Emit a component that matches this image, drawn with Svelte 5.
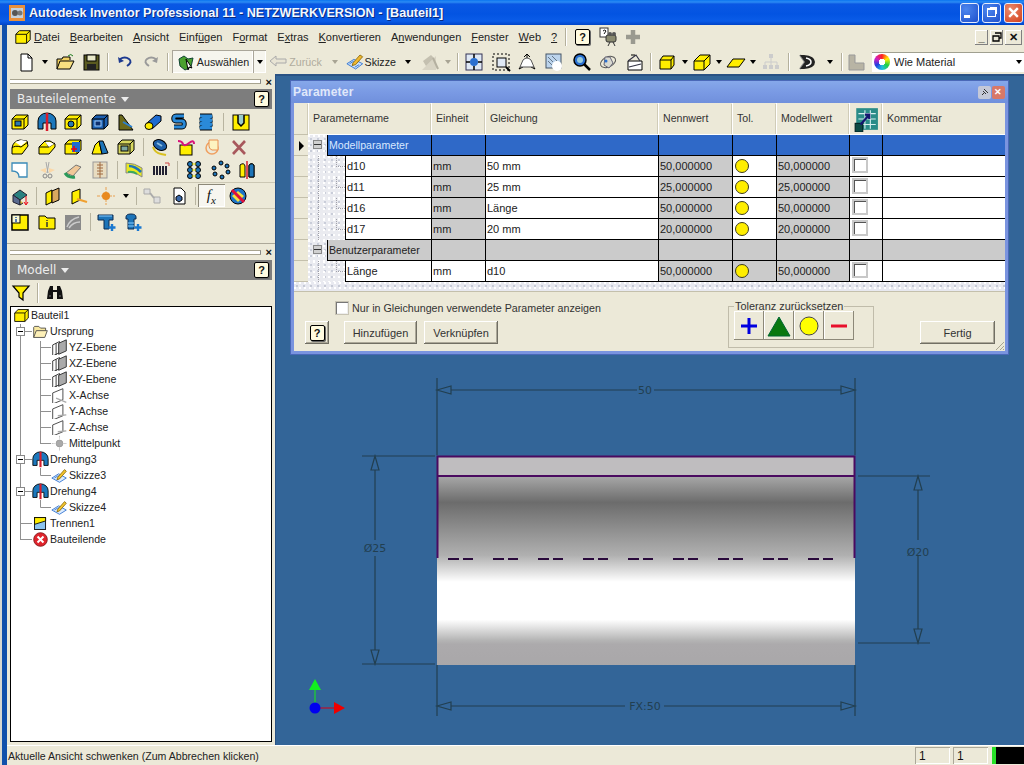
<script>
	// small icon helpers, all drawn on a 20x20 box
	const box = (inner = '', fill = '#ffee00') =>
		`<path d="M2 7l4-4h12v10l-4 4H2z" fill="${fill}" stroke="#000"/><path d="M2 7h12v10M14 7l4-4" fill="none" stroke="#000"/>${inner}`;
	const thick = (d, c) =>
		`<path d="${d}" fill="none" stroke="#000" stroke-width="5"/><path d="${d}" fill="none" stroke="${c}" stroke-width="3"/>`;
	const plus = `<path d="M15 12v7M11.500 15.500h7" stroke="#1a78d0" stroke-width="2.400"/>`;
	const planes = `<path d="M2 7l8-4v13l-8 4z" fill="#fff" stroke="#222"/><path d="M9 5l9-4v13l-9 4z" fill="#aaa" stroke="#222"/><path d="M6 5v15" stroke="#222"/>`;
	const axis = (d) => `<path d="M2 7l12-5v13L2 20z" fill="#fff" stroke="#333"/><path d="${d}" stroke="#aaa" stroke-width="1.500" fill="none"/>`;
	const revolve = `<path d="M1 17V9a9 8 0 0 1 18 0v8h-5v-6H6v6z" fill="#1d78bc" stroke="#000"/><path d="M10 1v18" stroke="#d81c2c" stroke-width="2.500"/>`;
	const sketch = `<path d="M1 13l8-5 9 5-8 5z" fill="#dcecff" stroke="#2a6fd0"/><path d="M4 13l5-3M7 15l5-3" stroke="#2a6fd0"/><path d="M8 12l8-9 2 2-8 9-3 1z" fill="#f4c52c" stroke="#8a6a10"/>`;

	const icons = {
		extrude: box('<rect x="5" y="9" width="6" height="5" fill="#2a7ab0" stroke="#000"/>'),
		revolve,
		hole: box('<circle cx="8" cy="12" r="3" fill="#2a7ab0" stroke="#000"/>'),
		shell: box('<rect x="5" y="9" width="6" height="5" fill="#0e2f6e" stroke="#9cf"/>', '#1d5fb0'),
		rib: '<path d="M3 18V3h3l11 15z" fill="#6c6a1c" stroke="#000"/><path d="M7 10l9 5" stroke="#2a80d0" stroke-width="2"/>',
		loft: '<path d="M4 11l9-8 5 1v5l-9 8z" fill="#1f6cd0" stroke="#000"/><ellipse cx="6" cy="14" rx="4" ry="3.500" fill="#ffee00" stroke="#000"/>',
		sweep: thick('M15 4H7c-3 0-3 5 0 5h6c3 0 3 6 0 6H5', '#2a8ad8'),
		coil: thick('M4 4h12l-12 4h12l-12 4h12l-12 4h12', '#2a8ad8'),
		emboss: '<rect x="2" y="3" width="16" height="15" fill="#ffee00" stroke="#000"/><path d="M7 3v8l3 3 3-3V3" fill="#9cc" stroke="#000" stroke-width="1.500"/>',
		fillet: '<path d="M2 17v-6q1-7 8-8l7 1 1 5-6 8z" fill="#ffee00" stroke="#000"/><path d="M2 11q3-3 9-1l7-5" fill="none" stroke="#000"/><path d="M5 5l6-2 6 1-6 5z" fill="#fff"/>',
		chamfer: '<path d="M2 17v-7l6-6h5l5 3v3l-6 7z" fill="#ffee00" stroke="#000"/><path d="M2 10l10 0 6-4M8 4l4 6" fill="none" stroke="#000"/><path d="M8 5h5l4 2-5 3z" fill="#fff"/>',
		moveface: box('<rect x="9" y="5" width="8" height="10" fill="#1f6cd0"/><path d="M8 12h6M11 9v6" stroke="#e01" stroke-width="1.500"/>', '#ffee00'),
		draft: '<path d="M2 17l3-9 4-4 3 13z" fill="#ffee00" stroke="#000"/><path d="M9 4h4l5 12-6 1z" fill="#1d74b8" stroke="#000"/>',
		split: box('<rect x="5" y="9" width="7" height="5" fill="#7fa8a0" stroke="#000"/>', '#d8d860'),
		bend: '<ellipse cx="10" cy="8" rx="7" ry="5" transform="rotate(25 10 8)" fill="#1d5fa8" stroke="#000"/><path d="M3 10q2 6 8 7l5 1" fill="none" stroke="#d8c020" stroke-width="2"/><path d="M7 6l5 3" stroke="#8bd" stroke-width="2"/>',
		replace: '<rect x="4" y="8" width="12" height="10" fill="#ffee00" stroke="#000"/><path d="M2 4q4 0 5 3t6-1 5 1" fill="none" stroke="#d8147a" stroke-width="2"/>',
		corner: '<circle cx="9" cy="11" r="6" fill="none" stroke="#f0a060" stroke-width="1.500"/><path d="M6 3h9v10H9q-3-1-3-4z" fill="#fdf3c0" stroke="#e89050"/>',
		del: '<path d="M4 4l12 13M16 4L4 17" stroke="#a8585c" stroke-width="2.600"/>',
		notch: '<path d="M2 3h15v14H9q0-6-7-6z" fill="#fff" stroke="#3a8ab8" stroke-width="1.300"/>',
		scissors: '<path d="M3 10l6-2v5zM18 10l-6-2v5z" fill="#fbd8a8"/><path d="M9 2l2 11M12 2l-2 11" stroke="#a8a8a8"/><circle cx="8" cy="16" r="2" fill="none" stroke="#888"/><circle cx="13" cy="16" r="2" fill="none" stroke="#888"/>',
		patch: '<path d="M3 13l10-8 5 2-8 9z" fill="#f0c898" stroke="#777"/><path d="M2 13q3 5 10 4" fill="none" stroke="#2a9a5a" stroke-width="3"/>',
		thread: '<rect x="3" y="2" width="14" height="16" fill="#e8dcc0" stroke="#999"/><path d="M10 2v16M7 5h6M7 8h6M7 11h6M7 14h6" stroke="#a06a40"/>',
		decal: '<path d="M2 3q9 0 16 5v9q-8-6-16-4z" fill="#e8e820" stroke="#888"/><path d="M5 6q6 0 12 6" fill="none" stroke="#1d74b8" stroke-width="2.500"/><path d="M4 12q5-1 9 2" fill="none" stroke="#3aa860" stroke-width="2"/>',
		barcode: '<path d="M3 6v9M6 6v9M9 6v9M12 6v9M15 6v9" stroke="#223" stroke-width="2"/><path d="M14 3h4v3" fill="none" stroke="#c44"/>',
		rect: '<g fill="#1d74b8" stroke="#000"><circle cx="6" cy="4" r="2.500"/><circle cx="14" cy="4" r="2.500"/><circle cx="6" cy="10" r="2.500"/><circle cx="14" cy="10" r="2.500"/><circle cx="6" cy="16" r="2.500"/><circle cx="14" cy="16" r="2.500"/></g><path d="M8 4h4M8 10h4M8 16h4" stroke="#dd0"/>',
		circ: '<g fill="#1d74b8" stroke="#000"><circle cx="10" cy="3" r="2"/><circle cx="16" cy="6" r="2"/><circle cx="17" cy="12" r="2"/><circle cx="11" cy="17" r="2"/><circle cx="4" cy="14" r="2"/><circle cx="3" cy="8" r="2"/></g>',
		mirror: '<path d="M3 5q4-3 5 1v11H3zM17 5q-4-3-5 1v11h5z" fill="#ffee00" stroke="#000"/><path d="M12 5q4-3 5 1v11h-5z" fill="#1d74b8" stroke="#000"/><path d="M10 1v18" stroke="#d81c2c" stroke-width="1.500"/>',
		derive: '<path d="M3 9l7-5 7 5-7 5z" fill="#2a8080" stroke="#223"/><path d="M3 9v7l7 3v-5z" fill="#5a6a90" stroke="#223"/><path d="M10 14v5l3-2" fill="#e0c040" stroke="#223"/><path d="M16 10v8m-2-2l2 3 2-3" stroke="#e01" fill="none"/>',
		wplane: '<path d="M3 7l6-3v12l-6 3z" fill="#ffee00" stroke="#000"/><path d="M9 5l7-3v12l-7 3z" fill="#d8a860" stroke="#000"/>',
		waxis: '<path d="M3 6l8-3v11l-8 4z" fill="#ffee00" stroke="#000"/><path d="M8 13l10 3" stroke="#f0a030" stroke-width="2"/>',
		wpoint: '<path d="M10 1v18M1 10h18" stroke="#e8a050" stroke-dasharray="3 1"/><circle cx="10" cy="10" r="4" fill="#e88a20"/>',
		link: '<path d="M2 3h6v5H2zM12 11h6v6h-6z" fill="#ddd" stroke="#aaa"/><path d="M8 7l4 5" stroke="#aaa" stroke-width="2"/>',
		doc: '<path d="M5 2h7l4 4v12H5z" fill="#fff" stroke="#000"/><path d="M7 11l3-2 3 2v3l-3 2-3-2z" fill="#3a68a8" stroke="#000"/>',
		nogo: '<circle cx="10" cy="10" r="8" fill="#1d74c8" stroke="#000"/><path d="M10 5l6 5-6 6-6-6z" fill="#f0e040"/><path d="M4 4l12 12" stroke="#e0103c" stroke-width="3"/>',
		note: '<rect x="2" y="3" width="16" height="15" fill="#ffee00" stroke="#000" stroke-width="1.500"/><rect x="2" y="3" width="8" height="8" fill="#f8f8d0" stroke="#000"/><path d="M6 5v1M6 7v3" stroke="#1d4fb0" stroke-width="1.500"/>',
		folderi: '<path d="M2 6V4h6l2 2h8v11H2z" fill="#ffee00" stroke="#000"/><path d="M10 8v1M10 10v5" stroke="#333" stroke-width="1.500"/>',
		sculpt: '<rect x="2" y="3" width="16" height="15" fill="#8a8a8a"/><path d="M4 15q3-8 12-10M6 16q4-6 11-6" stroke="#ccc" stroke-width="1.500" fill="none"/>',
		tpipe: `<path d="M1 3h15v5h-4v9H7V8H1z" fill="#1d74b8" stroke="#0c2a50"/><path d="M2 4h13" stroke="#8cf"/>${plus}`,
		bolt: `<path d="M3 5q0-3 5-3t5 3v2h-2v10H5V7H3z" fill="#1d74b8" stroke="#0c2a50"/><path d="M5 11h6M5 14h6" stroke="#8cf"/>${plus}`,
		filter: '<path d="M2 3h16l-6 7v7l-4-3v-4z" fill="#ffee00" stroke="#000" stroke-width="1.200"/>',
		binoc: '<path d="M3 8l2-5h3v4h4V3h3l2 5 1 8h-6v-7H8v7H2z" fill="#111"/><path d="M4 13h2M14 13h2" stroke="#777"/>',
		// tree
		part: box(''),
		folder: '<path d="M2 17V5l1-1h5l2 2h6v3" fill="#f8e8a0" stroke="#444"/><path d="M2 17l3-8h13l-3 8z" fill="#fdf0b8" stroke="#444"/>',
		planes,
		xaxis: axis('M6 13l12 5'),
		yaxis: axis('M8 15l10-1'),
		zaxis: axis('M8 15l10-1'),
		midpt: '<circle cx="10" cy="10" r="4" fill="#aaa" stroke="#999"/><path d="M10 1v4M10 15v4M1 10h4M15 10h3" stroke="#999" stroke-dasharray="1 1"/>',
		sketch,
		cut: '<rect x="3" y="3" width="13" height="14" fill="#8cc4f0" stroke="#000"/><path d="M3 3h13v4L3 11z" fill="#ffee00" stroke="#000"/>',
		end: '<circle cx="10" cy="10" r="8" fill="#e0242c" stroke="#801014"/><path d="M6.500 6.500l7 7M13.500 6.500l-7 7" stroke="#fff" stroke-width="2.400"/>',
		// main toolbar
		newdoc: '<path d="M5 2h7l4 4v13H5z" fill="#fff" stroke="#000"/><path d="M12 2v4h4" fill="none" stroke="#000"/>',
		open: '<path d="M2 17V7h5l1-2h7v3" fill="#f0d060" stroke="#000"/><path d="M2 17l3-8h14l-4 8z" fill="#f8e080" stroke="#000"/><path d="M13 4q3-3 5 0" fill="none" stroke="#1a7a1a"/>',
		save: '<rect x="3" y="3" width="15" height="15" fill="#5a5a20" stroke="#000"/><rect x="6" y="3" width="9" height="6" fill="#e8e8c8" stroke="#000"/><rect x="6" y="12" width="9" height="6" fill="#222"/>',
		undo: '<path d="M5 7q5-3 9 0t-2 7" fill="none" stroke="#1d3a90" stroke-width="2"/><path d="M3 5l1 6 5-2z" fill="#1d3a90"/>',
		redo: '<path d="M15 7q-5-3-9 0t2 7" fill="none" stroke="#9a9a9a" stroke-width="2"/><path d="M17 5l-1 6-5-2z" fill="#9a9a9a"/>',
		pick: '<path d="M3 7l5-3 4 3 5-1-2 9-6 3-5-4z" fill="#4aa030" stroke="#143"/><path d="M10 7l6 9-3-1-1 3z" fill="#fff" stroke="#000"/>',
		back: '<path d="M2 9l6-5v3h10v4H8v3z" fill="#e8e4d4" stroke="#aaa"/>',
		skizze: '<path d="M1 12l8-5 10 5-8 6z" fill="#cfe2fa" stroke="#2a6fd0"/><path d="M4 12l5-3M7 14l5-3M10 16l5-3" stroke="#2a6fd0"/><path d="M8 11l8-9 3 2-8 9-4 1z" fill="#f0b830" stroke="#8a6a10"/>',
		gsk: '<path d="M2 18l14-14v14z" fill="#d8d4c4"/><path d="M3 9l8-6 3 3-8 8z" fill="#c4c0b0"/><path d="M13 6l5 11" stroke="#b4b0a0" stroke-width="2"/>',
		zall: '<rect x="2" y="2" width="16" height="16" fill="#dfe8f4" stroke="#335"/><circle cx="10" cy="10" r="4" fill="#2a6fd0"/><path d="M10 2v4M10 14v4M2 10h4M14 10h4" stroke="#000" stroke-width="1.500"/>',
		zwin: '<rect x="2" y="2" width="16" height="16" fill="none" stroke="#000" stroke-dasharray="2 2"/><rect x="6" y="6" width="9" height="9" fill="#dfe8f4" stroke="#000"/><path d="M15 15l4 4" stroke="#000" stroke-width="2"/>',
		pan3: '<path d="M10 2v4M10 2l-3 3M10 2l3 3M2 17l4-2M2 17l2-3M18 17l-4-2M18 17l-2-3" stroke="#000" fill="none"/><path d="M6 8q4-4 8 0l3 7H3z" fill="#fff" stroke="#555"/>',
		hand: '<rect x="2" y="2" width="15" height="14" fill="#bcd4ec" stroke="#456"/><path d="M4 5l5 5M8 4l5 5M4 9l5 5" stroke="#678"/><circle cx="13" cy="14" r="5" fill="#fff"/>',
		zoom: '<circle cx="9" cy="8" r="6" fill="#2a6fd0" stroke="#000" stroke-width="1.500"/><circle cx="9" cy="8" r="3" fill="#9cd"/><path d="M13 12l6 6" stroke="#000" stroke-width="2.500"/>',
		orbit: '<ellipse cx="10" cy="10" rx="8" ry="5" transform="rotate(-25 10 10)" fill="none" stroke="#555"/><path d="M7 5l5 0 3 6-4 5-5-3z" fill="#d8d8d0" stroke="#667"/><circle cx="8" cy="9" r="1.500" fill="#2a6fd0"/>',
		look: '<path d="M3 9h14v9H3z" fill="#fff" stroke="#000"/><path d="M3 9l8-6 4 6M4 15l12-3" fill="none" stroke="#334" stroke-width="1.200"/><path d="M6 3h4" stroke="#000"/>',
		cube: '<path d="M3 8l3-4h11v9l-3 4H3z" fill="#ffee00" stroke="#000"/><path d="M3 8h11v9M14 8l3-4" fill="none" stroke="#000"/>',
		cube2: '<path d="M2 9l6-6h10v9l-6 6H2z" fill="#ffee00" stroke="#000"/><path d="M2 9h10v9M12 9l6-6" fill="none" stroke="#000"/>',
		face: '<path d="M1 15L7 7h12l-6 8z" fill="#ffee00" stroke="#000"/>',
		tree: '<rect x="8" y="2" width="4" height="4" fill="#ccc"/><rect x="2" y="13" width="4" height="4" fill="#ccc"/><rect x="8" y="13" width="4" height="4" fill="#ccc"/><rect x="14" y="13" width="4" height="4" fill="#ccc"/><path d="M10 6v7M4 13v-3h12v3" stroke="#ccc" fill="none"/>',
		shade: '<path d="M3 3l5 7-5 7" fill="none" stroke="#888" stroke-width="2"/><path d="M3 3h4q11 1 11 7t-11 7H3l5-7z" fill="#222"/><path d="M9 6q5 1 5 4t-5 4" fill="none" stroke="#fff" stroke-width="1.500"/>',
		display: '<path d="M3 3h6v8h9v7H3z" fill="#b8b4a4" stroke="#999"/>',
		// menu row
		helpfilm: '<rect x="2" y="1" width="8" height="9" fill="#fff" stroke="#333"/><path d="M5 4q2-2 3 0l-2 3" fill="none" stroke="#111"/><rect x="8" y="8" width="10" height="7" rx="2" fill="#8a8a70" stroke="#333"/><circle cx="12" cy="7" r="2" fill="#555"/><circle cx="16" cy="7" r="2" fill="#555"/><path d="M12 15l-2 4M15 15l2 4" stroke="#333"/>',
		addon: '<path d="M10 3v14M3 10h14" stroke="#9a9a90" stroke-width="4.500"/>'
	};

	const tools = [
		{ w: 24, i: 'newdoc' }, { w: 14, d: 1 }, { w: 26, i: 'open' }, { w: 26, i: 'save' }, { w: 8, s: 1 },
		{ w: 26, i: 'undo' }, { w: 26, i: 'redo' }, { w: 8, s: 1 },
		{ w: 81, i: 'pick', t: 'Auswählen', on: 1 }, { w: 13, d: 1, on: 1 },
		{ w: 58, i: 'back', t: 'Zurück', off: 1 }, { w: 22, d: 1, off: 1 },
		{ w: 50, i: 'skizze', t: 'Skizze' }, { w: 24, d: 1 }, { w: 20, i: 'gsk' }, { w: 16, d: 1, off: 1 }, { w: 4, s: 1 },
		{ w: 28, i: 'zall' }, { w: 26, i: 'zwin' }, { w: 26, i: 'pan3' }, { w: 28, i: 'hand' }, { w: 26, i: 'zoom' },
		{ w: 28, i: 'orbit' }, { w: 26, i: 'look' }, { w: 6, s: 1 },
		{ w: 26, i: 'cube' }, { w: 10, d: 1 }, { w: 24, i: 'cube2' }, { w: 10, d: 1 }, { w: 24, i: 'face' }, { w: 10, d: 1 },
		{ w: 26, i: 'tree' }, { w: 10, s: 1 }, { w: 26, i: 'shade' }, { w: 20, d: 1 }, { w: 4, s: 1 }, { w: 24, i: 'display' }
	];

	const menus = [
		['D', 'atei'], ['B', 'earbeiten'], ['A', 'nsicht'], ['', 'Einf', 'ü', 'gen'], ['', 'F', 'o', 'rmat'], ['', 'E', 'x', 'tras'],
		['K', 'onvertieren'], ['', 'A', 'n', 'wendungen'], ['F', 'enster'], ['W', 'eb'], ['?', '']
	];

	// '|' is a separator, 'v' a little dropdown arrow
	const panelRows = [
		{ cls: 'r1', items: ['extrude', 'revolve', 'hole', 'shell', 'rib', 'loft', 'sweep', 'coil', '|9', 'emboss'] },
		{ cls: 'r2', line: true, items: ['fillet', 'chamfer', 'moveface', 'draft', 'split', '|7', 'bend', 'replace', 'corner', 'del'] },
		{ cls: 'r3', items: ['notch', 'scissors', 'patch', 'thread', '|8', 'decal', 'barcode', '|7', 'rect', 'circ', 'mirror'] },
		{ cls: 'r4', line: true, items: ['derive', '|6', 'wplane', 'waxis', 'wpoint', 'v', '|6', 'link', 'doc', '|6', 'fx', 'nogo'] },
		{ cls: 'r5', line: true, items: ['note', 'folderi', 'sculpt', '|7', 'tpipe', 'bolt'] }
	];

	const treeRows = [
		{ lv: 0, i: 'part', t: 'Bauteil1' },
		{ lv: 1, i: 'folder', t: 'Ursprung' },
		{ lv: 2, i: 'planes', t: 'YZ-Ebene' },
		{ lv: 2, i: 'planes', t: 'XZ-Ebene' },
		{ lv: 2, i: 'planes', t: 'XY-Ebene' },
		{ lv: 2, i: 'xaxis', t: 'X-Achse' },
		{ lv: 2, i: 'yaxis', t: 'Y-Achse' },
		{ lv: 2, i: 'zaxis', t: 'Z-Achse' },
		{ lv: 2, i: 'midpt', t: 'Mittelpunkt' },
		{ lv: 1, i: 'revolve', t: 'Drehung3' },
		{ lv: 2, i: 'sketch', t: 'Skizze3' },
		{ lv: 1, i: 'revolve', t: 'Drehung4' },
		{ lv: 2, i: 'sketch', t: 'Skizze4' },
		{ lv: 1, i: 'cut', t: 'Trennen1' },
		{ lv: 1, i: 'end', t: 'Bauteilende' }
	];

	const params = [
		{ group: 'Modellparameter', kind: 'blue' },
		{ name: 'd10', eq: '50 mm', val: '50,000000', model: '50,000000' },
		{ name: 'd11', eq: '25 mm', val: '25,000000', model: '25,000000' },
		{ name: 'd16', eq: 'Länge', val: '50,000000', model: '50,000000' },
		{ name: 'd17', eq: '20 mm', val: '20,000000', model: '20,000000' },
		{ group: 'Benutzerparameter', kind: 'grey' },
		{ name: 'Länge', eq: 'd10', val: '50,000000', model: '50,000000', user: true }
	];

	const dashes = [448, 493, 538, 583, 628, 673, 718, 763, 808];
</script>

{#snippet ic(name)}
	<svg class="ic" viewBox="0 0 20 20" width="20" height="20">{@html icons[name]}</svg>
{/snippet}

{#snippet grip(cls)}
	<div class="grip {cls}"><span></span><b>×</b></div>
{/snippet}

<div class="app">
	<header class="titlebar">
		<svg class="applogo" viewBox="0 0 16 16" width="16" height="16">
			<rect width="16" height="16" fill="#e8903c" />
			<rect x="2" y="3" width="12" height="10" fill="#c4d0dc" />
			<circle cx="6" cy="8" r="3" fill="#555" />
			<circle cx="11" cy="8" r="2.500" fill="#777" />
		</svg>
		<span class="title">Autodesk Inventor Professional 11 - NETZWERKVERSION - [Bauteil1]</span>
		<div class="winbtns">
			<span class="wb"><i class="wmin"></i></span>
			<span class="wb"><i class="wmax"></i></span>
			<span class="wb close">
				<svg viewBox="0 0 12 12" width="13" height="13"><path d="M2 2l8 8M10 2l-8 8" stroke="#fff" stroke-width="2.200" /></svg>
			</span>
		</div>
	</header>

	<div class="frame">
		<div class="menubar">
			<svg class="menulogo" viewBox="0 0 20 20" width="18" height="18">{@html icons.part}</svg>
			<nav class="menus">
				{#each menus as m}
					{#if m.length === 2}
						<span><u>{m[0]}</u>{m[1]}</span>
					{:else}
						<span>{m[1]}<u>{m[2]}</u>{m[3]}</span>
					{/if}
				{/each}
			</nav>
			<i class="vsep"></i>
			<span class="helpicon">?</span>
			<span class="film">{@render ic('helpfilm')}</span>
			<span class="addon">{@render ic('addon')}</span>
			<div class="mdibtns">
				<span class="mdi">_</span>
				<span class="mdi"><svg viewBox="0 0 10 10" width="10" height="10"><path d="M3 1h6v5H7M1 4h6v5H1z" fill="none" stroke="#000" stroke-width="1.300" /></svg></span>
				<span class="mdi x">✕</span>
			</div>
		</div>

		<div class="toolbar">
			<div class="tools">
				{#each tools as t}
					{#if t.s}
						<div class="tool" style="width:{t.w}px"><i class="vsep"></i></div>
					{:else if t.d}
						<div class="tool" class:on={t.on} style="width:{t.w}px"><i class="caret" class:off={t.off}></i></div>
					{:else}
						<div class="tool" class:on={t.on} class:off={t.off} style="width:{t.w}px">
							{@render ic(t.i)}
							{#if t.t}<span>{t.t}</span>{/if}
						</div>
					{/if}
				{/each}
			</div>
			<div class="colorpick">
				<i class="wheel"></i>
				<span>Wie Material</span>
				<i class="caret"></i>
			</div>
		</div>

		<div class="main">
			<aside class="side">
				{@render grip('g1')}
				<div class="panelhead">
					<span>Bauteilelemente</span><i class="whitecaret"></i>
					<span class="helpicon">?</span>
				</div>
				<div class="panelicons">
					{#each panelRows as row}
						<div class="prow {row.cls}" class:line={row.line}>
							{#each row.items as it}
								{#if it[0] === '|'}
									<i class="psep psep{it.slice(1)}"></i>
								{:else if it === 'v'}
									<span class="pdrop"><i class="caret"></i></span>
								{:else if it === 'fx'}
									<span class="pcell fx"><em>f<sub>x</sub></em></span>
								{:else}
									<span class="pcell">{@render ic(it)}</span>
								{/if}
							{/each}
						</div>
					{/each}
				</div>
				{@render grip('g2')}
				<div class="panelhead">
					<span>Modell</span><i class="whitecaret"></i>
					<span class="helpicon">?</span>
				</div>
				<div class="filterrow">
					{@render ic('filter')}
					<i class="vsep"></i>
					{@render ic('binoc')}
				</div>
				<div class="tree">
					<svg class="treelines" width="60" height="240">
						<path d="M9.500 14v219M9.500 24.500h12M9.500 152.500h12M9.500 184.500h12M9.500 216.500h12M9.500 232.500h12M29.500 34v103M29.500 40.500h12M29.500 56.500h12M29.500 72.500h12M29.500 88.500h12M29.500 104.500h12M29.500 120.500h12M29.500 136.500h12M29.500 161v7.500h12M29.500 193v7.500h12" fill="none" stroke="#909090" />
						<g fill="#fff" stroke="#888">
							<rect x="5.500" y="20.500" width="8" height="8" />
							<rect x="5.500" y="148.500" width="8" height="8" />
							<rect x="5.500" y="180.500" width="8" height="8" />
						</g>
						<path d="M7 24.500h5M7 152.500h5M7 184.500h5" stroke="#000" />
					</svg>
					{#each treeRows as r}
						<div class="node lv{r.lv}">
							<svg class="nodeic" viewBox="0 0 20 20" width="17" height="17">{@html icons[r.i]}</svg>
							<span>{r.t}</span>
						</div>
					{/each}
				</div>
			</aside>

			<section class="canvas">
				<svg class="drawing" viewBox="275 74 749 671" width="749" height="671">
					<defs>
						<linearGradient id="shade" x1="0" y1="0" x2="0" y2="1">
							<stop offset="0" stop-color="#a8a8a8" />
							<stop offset="0.14" stop-color="#6c6c6c" />
							<stop offset="0.42" stop-color="#b0b0b0" />
							<stop offset="0.56" stop-color="#ffffff" />
							<stop offset="0.76" stop-color="#ffffff" />
							<stop offset="0.87" stop-color="#b4b4b4" />
							<stop offset="0.89" stop-color="#acaaac" />
							<stop offset="1" stop-color="#a9a7a9" />
						</linearGradient>
					</defs>
					<rect x="437" y="476" width="418" height="189" fill="url(#shade)" />
					<rect x="437" y="456" width="418" height="20" fill="#bfbdbf" />
					<path d="M437.500 558V456.500h417V558M437 476h418" fill="none" stroke="#4a0a60" stroke-width="2" />
					<g fill="#2a0a3c">
						{#each dashes as x}
							<rect {x} y="558" width="11" height="2" />
							<rect x={x + 15} y="558" width="10" height="2" />
						{/each}
					</g>
					<g fill="none" stroke="#223f50" stroke-width="1.200">
						<path d="M437 378v77M855 378v77M451 390h186M654 390h187" />
						<path d="M437 390l14-4v8zM855 390l-14-4v8z" />
						<path d="M437 665v51M855 665v51M451 706h174M664 706h177" />
						<path d="M437 706l14-4v8zM855 706l-14-4v8z" />
						<path d="M362 456h73M362 664h73M375 470v70M375 556v94" />
						<path d="M375 456l-4 14h8zM375 664l-4-14h8z" />
						<path d="M858 476h72M858 643h72M918 490v50M918 556v73" />
						<path d="M918 476l-4 14h8zM918 643l-4-14h8z" />
					</g>
					<g class="dimtext" fill="#223f50" text-anchor="middle">
						<text x="645" y="394">50</text>
						<text x="645" y="710">FX:50</text>
						<text x="375" y="552">Ø25</text>
						<text x="918" y="556">Ø20</text>
					</g>
					<path d="M315 708V690" stroke="#20c040" stroke-width="1.500" />
					<path d="M309 690l6-11 6 11z" fill="#12f020" />
					<path d="M315 708h21" stroke="#a02040" stroke-width="1.500" />
					<path d="M334 702l11 6-11 6z" fill="#f00000" />
					<circle cx="315" cy="708" r="5.500" fill="#0000f0" />
				</svg>

				<div class="dialog">
					<div class="dlgtitle">
						<span>Parameter</span>
						<div class="dlgbtns">
							<span class="pin"><svg viewBox="0 0 10 10" width="10" height="10"><path d="M2 8l3-3M4 2l4 4M3 4l3 3" stroke="#333" fill="none" /></svg></span>
							<span class="dx">✕</span>
						</div>
					</div>
					<div class="dlgbody">
						<div class="grid ghead">
							<div class="stub"></div>
							<div class="hc">Parametername</div>
							<div class="hc">Einheit</div>
							<div class="hc">Gleichung</div>
							<div class="hc">Nennwert</div>
							<div class="hc">Tol.</div>
							<div class="hc">Modellwert</div>
							<div class="hc hicon">
								<svg viewBox="0 0 22 24" width="24" height="26">
									<rect x="2" y="2" width="20" height="20" fill="#2a8c88" />
									<path d="M4 7h16M4 12h16M4 17h16M10 4v17M15 4v17" stroke="#d8f0f0" />
									<rect x="1" y="16" width="7" height="8" fill="#0c4a44" stroke="#022" />
									<path d="M6 17l8-9m-4 0h4v4" stroke="#141470" stroke-width="2" fill="none" />
								</svg>
							</div>
							<div class="hc">Kommentar</div>
						</div>
						{#each params as p, n}
							{#if p.group}
								<div class="grid prm {p.kind}">
									<div class="stub">{#if n === 0}<i class="rowmark"></i>{/if}</div>
									<div class="namecol">
										<div class="indent groupin"><i class="minus"></i></div>
										<div class="cell gname">{p.group}</div>
									</div>
									<div class="cell"></div>
									<div class="cell"></div>
									<div class="cell"></div>
									<div class="cell"></div>
									<div class="cell"></div>
									<div class="cell"></div>
									<div class="cell"></div>
								</div>
							{:else}
								<div class="grid prm">
									<div class="stub"></div>
									<div class="namecol">
										<div class="indent childin"></div>
										<div class="cell">{p.name}</div>
									</div>
									<div class="cell" class:ro={!p.user}>mm</div>
									<div class="cell">{p.eq}</div>
									<div class="cell ro">{p.val}</div>
									<div class="cell" class:ro={p.user}><i class="dot"></i></div>
									<div class="cell ro">{p.model}</div>
									<div class="cell"><i class="chk"></i></div>
									<div class="cell"></div>
								</div>
							{/if}
						{/each}
						<div class="speckle"></div>
						<div class="dlgfoot">
							<div class="footleft">
								<label class="only">
									<i class="check"></i>
									Nur in Gleichungen verwendete Parameter anzeigen
								</label>
								<div class="btnrow">
									<span class="btn helpbtn"><span class="helpicon">?</span></span>
									<span class="btn b1">Hinzufügen</span>
									<span class="btn b2">Verknüpfen</span>
								</div>
							</div>
							<fieldset class="tolbox">
								<legend>Toleranz zurücksetzen</legend>
								<span class="tolbtn">
									<svg viewBox="0 0 20 20" width="20" height="20"><path d="M10 2v16M2 10h16" stroke="#0000e0" stroke-width="3" /></svg>
								</span>
								<span class="tolbtn">
									<svg viewBox="0 0 26 24" width="26" height="24"><path d="M13 3l11 19H2z" fill="#0a780f" stroke="#063" /></svg>
								</span>
								<span class="tolbtn">
									<svg viewBox="0 0 22 22" width="22" height="22"><circle cx="11" cy="11" r="9" fill="#ffff00" stroke="#444" /></svg>
								</span>
								<span class="tolbtn">
									<svg viewBox="0 0 20 20" width="20" height="20"><path d="M2 10h16" stroke="#e8102c" stroke-width="3" /></svg>
								</span>
							</fieldset>
							<span class="btn fertig">Fertig</span>
							<svg class="resize" viewBox="0 0 12 12" width="12" height="12"><path d="M11 3l-8 8M11 7l-4 4M11 10l-1 1" stroke="#a8a490" /></svg>
						</div>
					</div>
				</div>
			</section>
		</div>

		<footer class="status">
			<span class="stext">Aktuelle Ansicht schwenken (Zum Abbrechen klicken)</span>
			<span class="scell">1</span>
			<span class="scell">1</span>
			<div class="meter"></div>
		</footer>
	</div>
</div>

<style>
	:global(body) {
		margin: 0;
		background: #ece9d8;
	}

	.app {
		width: 1024px;
		height: 765px;
		display: flex;
		flex-direction: column;
		overflow: hidden;
		font: 11px "Liberation Sans", Arial, sans-serif;
		color: #111;
	}

	.titlebar {
		height: 25px;
		flex: none;
		display: flex;
		align-items: center;
		padding: 0 1px 0 9px;
		background: linear-gradient(#0a74f0 0, #2c8cf4 2px, #0a58e4 4px, #0354e2 14px, #0a5ce8 21px, #0044c8 25px);
	}
	.applogo {
		margin-right: 4px;
	}
	.title {
		color: #f4f8ff;
		font-weight: bold;
		font-size: 12.600px;
		text-shadow: 1px 1px #0a2a80;
	}
	.winbtns {
		margin-left: auto;
		display: flex;
		gap: 3px;
	}
	.wb {
		width: 19px;
		height: 20px;
		border: 1px solid #e8eefc;
		border-radius: 3px;
		box-sizing: border-box;
		background: radial-gradient(circle at 30% 30%, #4c86ee, #1f50cc);
		display: flex;
		align-items: center;
		justify-content: center;
		position: relative;
	}
	.wb.close {
		background: radial-gradient(circle at 30% 30%, #ec8a6c, #d2401c);
	}
	.wmin {
		width: 6px;
		height: 3px;
		background: #fff;
		margin: 7px 6px 0 0;
	}
	.wmax {
		width: 7px;
		height: 6px;
		border: 1px solid #fff;
		border-top-width: 2px;
		box-shadow: 2px -2px 0 -1px #fff;
	}

	.frame {
		flex: 1;
		min-height: 0;
		display: flex;
		flex-direction: column;
		background: #ece9d8;
		border-left: 2px solid #d8d8d0;
		box-shadow: inset 5px 0 0 #1150ab;
	}

	.menubar {
		height: 24px;
		flex: none;
		margin-left: 5px;
		padding-left: 7px;
		display: flex;
		align-items: center;
		background: #ece9d8;
	}
	.menulogo {
		margin-right: 2px;
	}
	.menus {
		display: flex;
		gap: 10px;
		font-size: 11px;
		width: 531px;
		color: #222;
	}
	.vsep {
		width: 1px;
		height: 18px;
		background: #b4b09c;
		border-right: 1px solid #fff;
		display: block;
		flex: none;
	}
	.helpicon {
		width: 13px;
		height: 14px;
		display: inline-flex;
		align-items: center;
		justify-content: center;
		background: #fffbe0;
		border: 1px solid #000;
		border-radius: 2px;
		font-weight: bold;
		font-size: 11px;
		color: #111;
		flex: none;
		box-shadow: 1px 1px 0 #666;
	}
	.menubar .helpicon {
		margin-left: 8px;
	}
	.film {
		margin-left: 8px;
		display: flex;
	}
	.addon {
		margin-left: 5px;
		display: flex;
	}
	.mdibtns {
		margin-left: auto;
		margin-right: 2px;
		display: flex;
		gap: 2px;
	}
	.mdi {
		width: 13px;
		height: 15px;
		background: #ece9d8;
		box-shadow: inset -1px -1px #808080, inset 1px 1px #fff;
		display: flex;
		align-items: center;
		justify-content: center;
		font-weight: bold;
		font-size: 11px;
		line-height: 9px;
	}
	.mdi.x {
		width: 17px;
	}

	.toolbar {
		height: 25px;
		flex: none;
		margin-left: 5px;
		display: flex;
		align-items: center;
		justify-content: space-between;
		padding-left: 7px;
	}
	.tools {
		display: flex;
		align-items: center;
		height: 23px;
	}
	.tool {
		height: 23px;
		flex: none;
		display: flex;
		align-items: center;
		justify-content: center;
		gap: 1px;
		box-sizing: border-box;
		white-space: nowrap;
		font-size: 10.700px;
		color: #222;
	}
	.tool.on {
		background: #f6f5ee;
		box-shadow: inset 1px 1px #aaa69a, inset -1px -1px #fff;
	}
	.tool.off span {
		color: #b0ac9e;
	}
	.caret {
		display: block;
		width: 0;
		height: 0;
		border: 3.500px solid transparent;
		border-top: 4px solid #000;
		border-bottom: 0;
	}
	.caret.off {
		border-top-color: #a8a494;
	}
	.colorpick {
		width: 152px;
		height: 20px;
		box-sizing: border-box;
		background: #fff;
		display: flex;
		align-items: center;
		gap: 4px;
		padding: 0 1px 0 2px;
		border-top: 1px solid #a0a090;
		font-size: 11px;
		color: #222;
	}
	.colorpick .caret {
		margin-left: auto;
		margin-right: 1px;
	}
	.wheel {
		width: 16px;
		height: 16px;
		border-radius: 50%;
		background:
			radial-gradient(circle, #fff 0 3px, transparent 3.500px),
			conic-gradient(#ff2020, #ffee00, #20d040, #20c0e0, #2040e0, #d020c0, #ff2020);
	}

	.main {
		flex: 1;
		min-height: 0;
		display: flex;
		margin-left: 5px;
	}

	.side {
		width: 268px;
		flex: none;
		display: flex;
		flex-direction: column;
		padding-left: 3px;
		box-sizing: border-box;
	}
	.grip {
		height: 15px;
		flex: none;
		display: flex;
		align-items: center;
		gap: 5px;
		padding-right: 3px;
	}
	.grip.g2 {
		height: 16px;
	}
	.grip span {
		flex: 1;
		height: 3px;
		border-top: 1px solid #a8a490;
		border-bottom: 1px solid #a8a490;
		border-right: 1px solid #888;
		background: #fff;
	}
	.grip b {
		font-size: 11px;
		line-height: 10px;
	}
	.panelhead {
		height: 20px;
		flex: none;
		background: #7d7d7d;
		display: flex;
		align-items: center;
		padding: 0 3px 0 7px;
		color: #ececec;
		font: 12px "DejaVu Sans", Verdana, sans-serif;
		margin-right: 3px;
	}
	.panelhead .helpicon {
		margin-left: auto;
		font-family: "Liberation Sans", sans-serif;
	}
	.whitecaret {
		margin-left: 5px;
		width: 0;
		height: 0;
		border: 4px solid transparent;
		border-top: 5px solid #ececec;
		border-bottom: 0;
	}

	.panelicons {
		height: 134px;
		flex: none;
		border-bottom: 1px solid #aca899;
		margin-left: -3px;
	}
	.prow {
		display: flex;
		align-items: center;
		height: 25px;
		box-sizing: border-box;
	}
	.prow.r3 {
		height: 21px;
	}
	.prow.r4 {
		height: 26px;
		margin-top: 2px;
	}
	.prow.r5 {
		height: 27px;
	}
	.prow.line {
		border-top: 1px solid #cbc7b4;
	}
	.pcell {
		width: 26.500px;
		flex: none;
		display: flex;
		justify-content: center;
	}
	.psep {
		flex: none;
		height: 18px;
		display: block;
	}
	.psep::after {
		content: "";
		display: block;
		margin: 0 auto;
		width: 1px;
		height: 18px;
		background: #b8b4a0;
	}
	.psep6 {
		width: 6px;
	}
	.psep7 {
		width: 7px;
	}
	.psep8 {
		width: 8px;
	}
	.psep9 {
		width: 9px;
	}
	.pdrop {
		width: 14px;
		display: flex;
		justify-content: center;
		flex: none;
	}
	.fx {
		height: 23px;
		align-items: center;
		background: #f7f6f0;
		box-shadow: inset 1px 1px #8c8878, inset -1px -1px #fff;
		font: italic 15px "Liberation Serif", serif;
	}
	.fx sub {
		font-size: 11px;
		line-height: 0;
	}

	.filterrow {
		height: 26px;
		flex: none;
		display: flex;
		align-items: center;
		gap: 6px;
		padding-left: 1px;
	}
	.filterrow .vsep {
		height: 20px;
	}

	.tree {
		flex: 1;
		margin: 0 3px 3px 0;
		min-height: 0;
		background: #fff;
		border: 1px solid #000;
		position: relative;
		font-size: 10.600px;
		color: #222;
	}
	.treelines {
		position: absolute;
		left: 0;
		top: 0;
		pointer-events: none;
	}
	.node {
		height: 16px;
		display: flex;
		align-items: center;
		gap: 1px;
		position: relative;
		white-space: nowrap;
	}
	.nodeic {
		flex: none;
		background: #fff;
	}
	.lv0 {
		padding-left: 2px;
	}
	.lv1 {
		padding-left: 21px;
	}
	.lv2 {
		padding-left: 40px;
	}

	.canvas {
		flex: 1;
		min-width: 0;
		position: relative;
		background: #336598;
		overflow: hidden;
		border-top: 2px solid #2a5284;
		border-left: 1px solid #2a5284;
		box-sizing: border-box;
	}
	.drawing {
		position: absolute;
		left: -1px;
		top: -2px;
	}
	.dimtext {
		font: 11px "DejaVu Sans", sans-serif;
	}

	.dialog {
		position: absolute;
		left: 15px;
		top: 5px;
		width: 717px;
		height: 273px;
		box-sizing: border-box;
		background: #7a94df;
		padding: 0 3px 3px;
		box-shadow: 0 0 0 1px #4a68b8;
		display: flex;
		flex-direction: column;
	}
	.dlgtitle {
		height: 22px;
		flex: none;
		display: flex;
		align-items: center;
		justify-content: space-between;
		margin: 0 -3px;
		padding: 0 3px 0 2px;
		background: linear-gradient(#86a8ea, #7a9ae4 50%, #7090dc);
		color: #e0e8fa;
		font-weight: bold;
		font-size: 12px;
		letter-spacing: 0.2px;
	}
	.dlgbtns {
		display: flex;
		gap: 1px;
	}
	.pin,
	.dx {
		width: 13px;
		height: 13px;
		background: #c4c8d8;
		display: flex;
		align-items: center;
		justify-content: center;
		border-radius: 2px;
		font-size: 9px;
		font-weight: bold;
	}
	.dx {
		background: #d87868;
		color: #fff;
	}
	.dlgbody {
		flex: 1;
		min-height: 0;
		display: flex;
		flex-direction: column;
		background: #ece9d8;
	}
	.grid {
		display: grid;
		grid-template-columns: 14px 123px 54px 173px 74px 44px 73px 33px 122px;
		flex: none;
	}
	.ghead {
		height: 32px;
		box-shadow: inset 0 -1px #fff;
	}
	.hc {
		display: flex;
		align-items: center;
		padding: 0 0 3px 4px;
		border-left: 1px solid #fff;
		box-shadow: -2px 0 0 -1px #d0ccb8;
		color: #333;
		font-size: 10.600px;
	}
	.hicon {
		padding: 0 0 0 4px;
	}
	.stub {
		background: #ece9d8;
		box-shadow: inset 0 -1px #c4c0ac;
		display: flex;
		align-items: center;
		justify-content: center;
	}
	.rowmark {
		width: 0;
		height: 0;
		border: 5px solid transparent;
		border-left: 5px solid #000;
		border-right: 0;
	}
	.prm {
		height: 21px;
		background: #fff;
		border-bottom: 1px solid #000;
		box-sizing: border-box;
	}
	.prm .stub {
		margin-bottom: -1px;
	}
	.cell {
		border-left: 1px solid #000;
		display: flex;
		align-items: center;
		padding-left: 1px;
		min-width: 0;
		white-space: nowrap;
		font-size: 11px;
		color: #222;
	}
	.cell.gname {
		font-size: 10.600px;
	}
	.cell.ro {
		background: #cbcbcb;
	}
	.blue {
		background: #2f69c8;
	}
	.blue .cell {
		color: #d8e8ff;
	}
	.grey {
		background: #cbcbcb;
	}
	.namecol {
		display: flex;
		min-width: 0;
	}
	.namecol .cell {
		flex: 1;
	}
	.indent {
		flex: none;
		position: relative;
		margin-bottom: -1px;
		background-color: #eaebf0;
		background-image:
			radial-gradient(circle at 1px 1px, #fff 1px, transparent 1.500px),
			radial-gradient(circle at 3px 4px, #c8ccd8 0.700px, transparent 1.200px);
		background-size: 5px 5px, 7px 6px;
	}
	.groupin {
		width: 19px;
	}
	.childin {
		width: 37px;
	}
	.childin::before {
		content: "";
		position: absolute;
		left: 10px;
		top: 0;
		bottom: 0;
		border-left: 1px dotted #a0a0a8;
	}
	.childin::after {
		content: "";
		position: absolute;
		left: 28px;
		right: 0;
		top: 0;
		height: 10px;
		border-left: 1px dotted #a0a0a8;
		border-bottom: 1px dotted #a0a0a8;
	}
	.minus {
		position: absolute;
		left: 5px;
		top: 5px;
		width: 9px;
		height: 9px;
		box-sizing: border-box;
		border: 1px solid #888;
		background: linear-gradient(#d0d0d0 0 3px, #333 3px 4px, #d0d0d0 4px);
	}
	.dot {
		width: 14px;
		height: 14px;
		box-sizing: border-box;
		border-radius: 50%;
		background: #ffee00;
		border: 1px solid #3c3c20;
		margin-left: 1px;
	}
	.chk {
		width: 12px;
		height: 12px;
		background: #fff;
		box-shadow: inset 1px 1px #555, 0 0 0 2px #c8c8c8;
		margin-left: 3px;
		margin-top: -2px;
	}
	.speckle {
		height: 9px;
		flex: none;
		background-color: #e8e9f0;
		background-image:
			radial-gradient(circle at 1px 1px, #fff 1px, transparent 1.500px),
			radial-gradient(circle at 3px 4px, #c4c8d4 0.700px, transparent 1.200px);
		background-size: 5px 5px, 7px 6px;
	}

	.dlgfoot {
		flex: 1;
		min-height: 0;
		display: flex;
		align-items: flex-start;
		position: relative;
		border-top: 1px solid #c4c0ac;
	}
	.footleft {
		width: 434px;
		flex: none;
		padding-top: 8px;
	}
	.only {
		display: flex;
		align-items: center;
		gap: 4px;
		padding-left: 42px;
		height: 15px;
		color: #333;
		font-size: 10.700px;
	}
	.check {
		width: 12px;
		height: 12px;
		background: #fff;
		box-shadow: inset 1px 1px #777, inset -1px -1px #eee, 0 0 0 1px #c8c4b4;
	}
	.btnrow {
		display: flex;
		margin-top: 6px;
		padding-left: 11px;
	}
	.btn {
		height: 23px;
		background: #ece9d8;
		box-sizing: border-box;
		box-shadow: inset -1px -1px #716f64, inset 1px 1px #fff, inset -2px -2px #aca899;
		display: flex;
		align-items: center;
		justify-content: center;
		color: #333;
	}
	.helpbtn {
		width: 24px;
	}
	.b1 {
		width: 73px;
		margin-left: 15px;
	}
	.b2 {
		width: 74px;
		margin-left: 7px;
	}
	.tolbox {
		width: 146px;
		height: 47px;
		box-sizing: border-box;
		margin: 9px 0 0 0;
		padding: 0 0 0 5px;
		border: 1px solid #c0bcaa;
		display: flex;
		align-items: flex-start;
	}
	.tolbox legend {
		padding: 0 1px;
		margin-left: 0;
		font-size: 10.900px;
		line-height: 10px;
		color: #333;
	}
	.tolbtn {
		width: 30px;
		height: 29px;
		box-sizing: border-box;
		box-shadow: inset -1px -1px #8c8878, inset 1px 1px #fff;
		display: flex;
		align-items: center;
		justify-content: center;
	}
	.fertig {
		width: 75px;
		margin: 29px 0 0 46px;
	}
	.resize {
		position: absolute;
		right: 0;
		bottom: 0;
	}

	.status {
		height: 20px;
		flex: none;
		margin-left: 5px;
		border-top: 1px solid #fff;
		box-sizing: border-box;
		display: flex;
		align-items: center;
		gap: 3px;
		overflow: hidden;
	}
	.stext {
		flex: 1;
		margin-left: 1px;
		color: #222;
		font-size: 10.600px;
	}
	.scell {
		width: 35px;
		height: 17px;
		box-sizing: border-box;
		padding-left: 4px;
		box-shadow: inset 1px 1px #aca899, inset -1px -1px #fff;
		display: flex;
		align-items: center;
		font-size: 12px;
	}
	.meter {
		width: 32px;
		height: 17px;
		margin-left: 1px;
		background: #000;
		border-left: 4px solid #28e028;
		box-sizing: border-box;
	}
</style>
